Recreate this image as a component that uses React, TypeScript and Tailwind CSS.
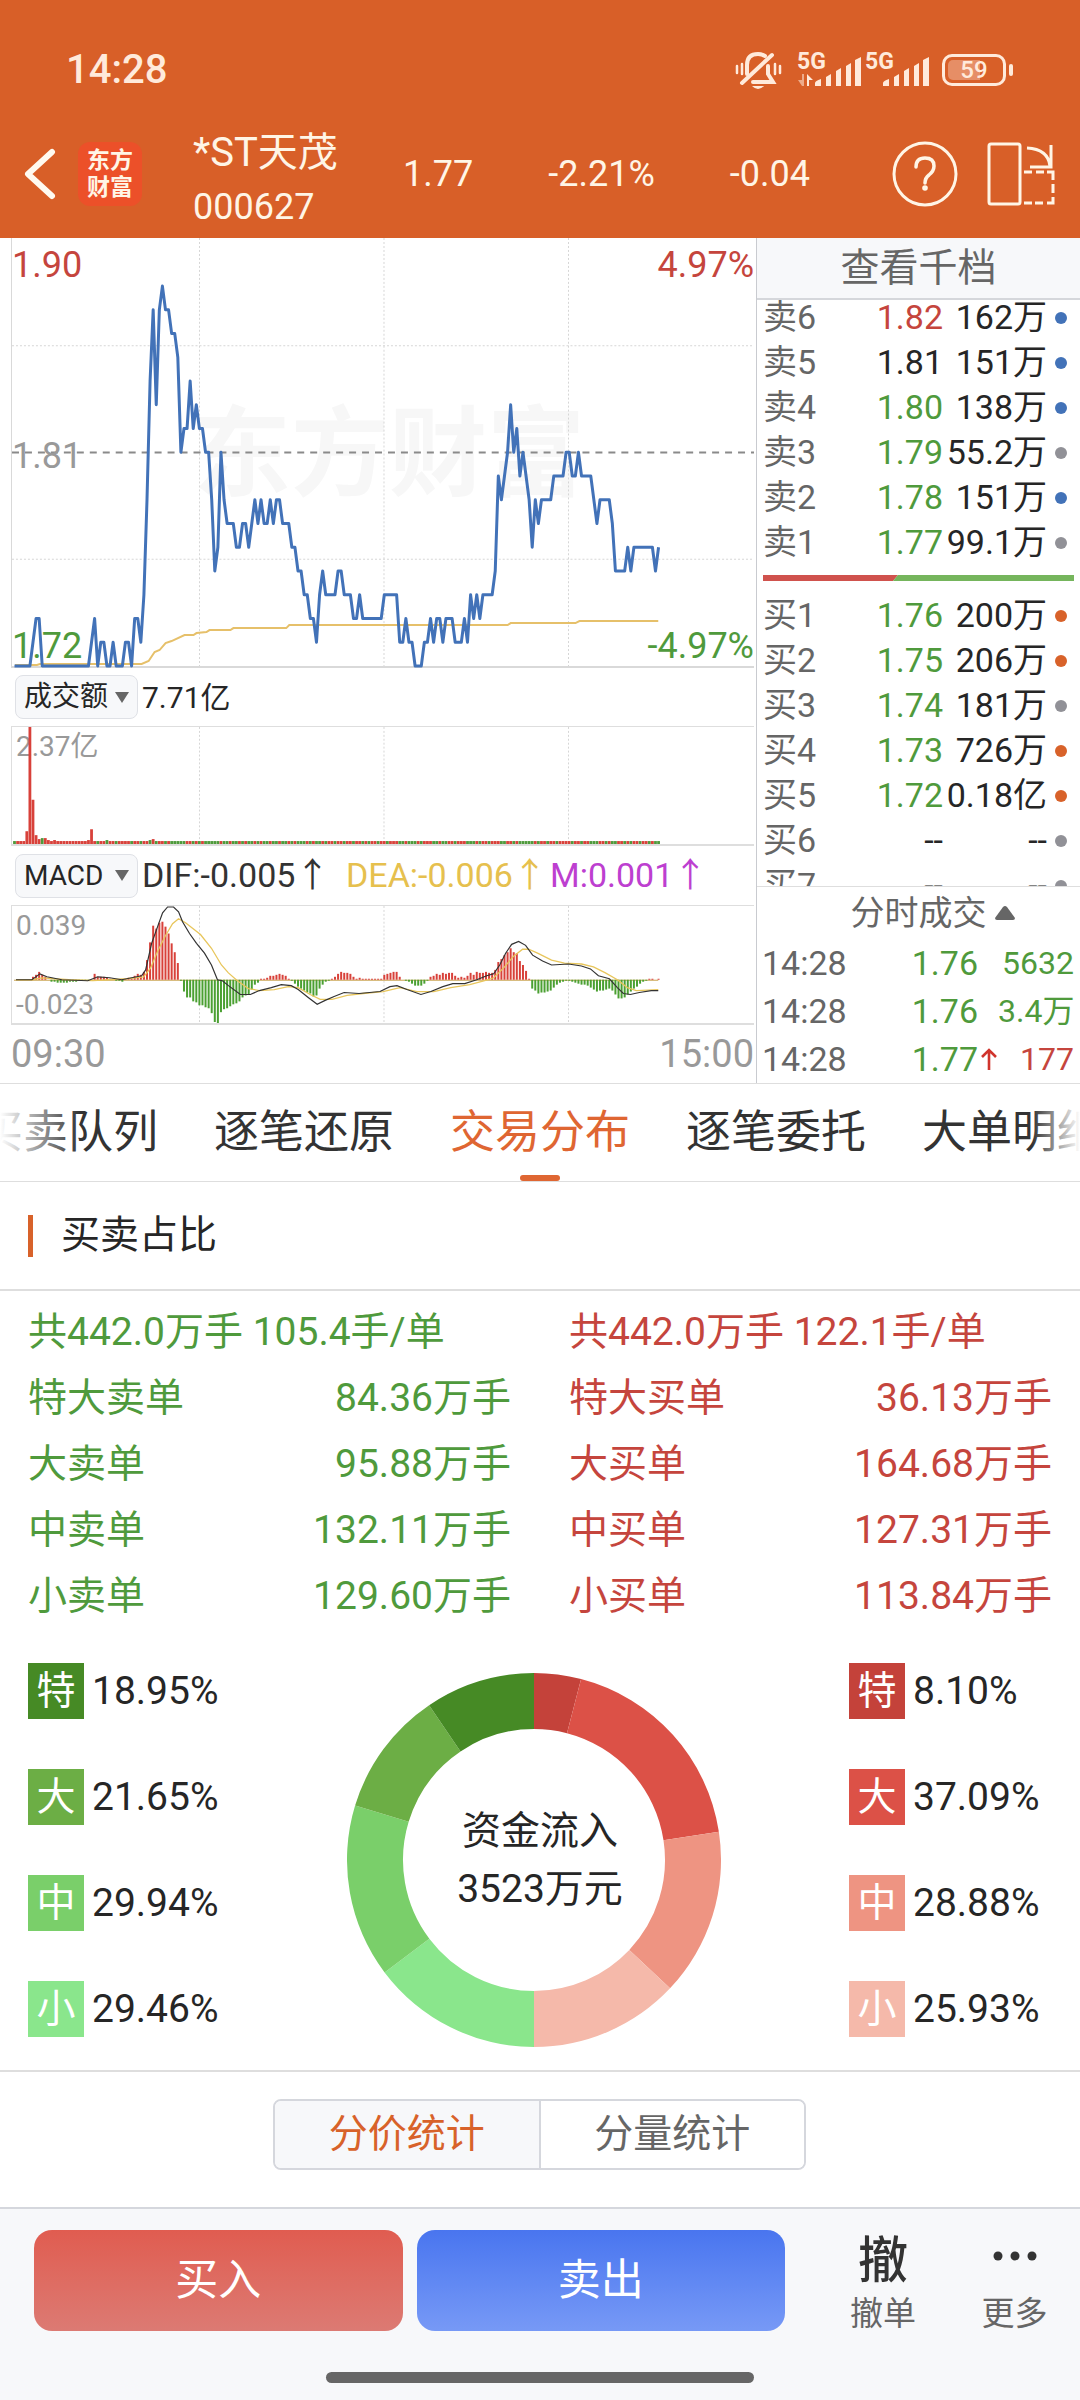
import { useState } from 'react';

// [price step above 1.72, minutes it holds]
const PRICE_RUNS: [number, number][] = [
  [0, 6], [1, 1], [2, 2], [0, 16], [1, 1], [2, 1], [0, 1], [1, 2], [0, 2], [1, 1],
  [0, 3], [1, 2], [0, 1], [2, 2], [1, 1], [3, 1], [7, 1], [12, 1], [15, 1], [11, 1],
  [15, 1], [16, 1], [15, 2], [14, 2], [13, 1], [9, 1], [10, 2], [12, 1], [10, 1], [11, 1],
  [10, 2], [9, 2], [7, 1], [4, 1], [5, 1], [9, 1], [7, 1], [6, 3], [5, 2], [6, 2],
  [5, 1], [6, 1], [7, 1], [6, 1], [7, 1], [6, 2], [7, 1], [6, 1], [7, 2], [6, 3],
  [5, 2], [4, 2], [3, 2], [2, 2], [1, 1], [3, 1], [4, 1], [3, 4], [4, 2], [3, 3],
  [2, 2], [3, 1], [2, 7], [3, 5], [1, 2], [2, 1], [1, 2], [0, 3], [1, 2], [2, 1],
  [1, 1], [2, 2], [1, 1], [2, 3], [1, 3], [2, 1], [1, 1], [3, 1], [2, 1], [3, 1],
  [2, 1], [3, 4], [4, 1], [8, 1], [7, 1], [8, 1], [9, 1], [11, 1], [9, 1], [10, 1],
  [8, 1], [9, 1], [8, 1], [7, 1], [5, 1], [7, 1], [6, 1], [7, 4], [8, 4], [9, 2],
  [8, 2], [9, 1], [8, 4], [7, 1], [6, 1], [7, 4], [6, 1], [4, 4], [5, 1], [4, 1],
  [5, 7], [4, 1], [5, 1],
];

const prices = PRICE_RUNS.flatMap(([value, count]) => Array<number>(count).fill(value));

const minuteX = (i: number) => 2.5 + i * 3.09;

const pricePoints = prices.map((p, i) => `${minuteX(i)},${429 - p * 23.8}`).join(' ');

const AVERAGE_POINTS =
  '3,428 25,428 28,427 130,427 137,424 143,415 148,413 154,406 160,404 173,398 182,398 185,396 195,395 198,393 219,393 222,391 275,391 278,388 497,388 500,386 565,386 569,384 648,384';

const VOLUME_SPIKES: Record<number, number> = {
  4: 13, 5: 119, 6: 45, 7: 9, 8: 5, 9: 6, 10: 6, 11: 4, 13: 4, 24: 4, 25: 15, 30: 4, 44: 4, 45: 5,
};

const MACD_BARS = [
  0, 0, 0, 0, 0, 0, 3, 5, 8, 5, 3, 0, -2, -2, -3, -3, -3, -3, -2, -2,
  -2, -1, -1, -1, -1, 0, 6, 3, 3, 3, 2, 1, 1, -1, -1, -2, 1, 2, 1, 4,
  6, 5, 8, 20, 38, 55, 52, 58, 59, 54, 47, 37, 28, 17, -1, -12, -18, -18, -22, -23,
  -26, -26, -28, -29, -34, -43, -44, -33, -30, -29, -27, -25, -24, -22, -18, -16, -15, -10, -5, -3,
  1, 1, 2, 4, 4, 5, 6, 5, 4, 1, -1, -4, -7, -9, -11, -13, -14, -17, -16, -9,
  -5, -2, -1, 1, 3, 6, 8, 7, 7, 6, 3, 1, 2, 1, 1, 1, 1, 1, 1, 1,
  5, 6, 7, 8, 8, 3, 0, -1, -2, -4, -6, -6, -6, -4, -1, 3, 4, 6, 5, 7,
  6, 7, 7, 4, 2, 3, 2, 4, 7, 5, 8, 7, 7, 8, 7, 7, 10, 18, 21, 25,
  28, 32, 28, 27, 19, 15, 9, 1, -9, -11, -14, -13, -13, -12, -11, -8, -5, -3, -2, -1,
  -1, -2, -3, -4, -5, -5, -6, -8, -10, -12, -11, -11, -10, -9, -11, -15, -19, -19, -18, -15,
  -12, -9, -7, -4, -2, -1, 1, 1, 0, 1,
];

const DIF_POINTS =
  '4,75 20,75 28,69 35,72 50,75 76,76 86,72 98,73 110,75 120,73 130,71 134,65 140,38 146,21 151,7 156,1 162,1 167,6 171,16 178,28 185,38 193,48 200,60 206,75 211,76 217,81 229,90 239,90 248,86 260,83 270,80 280,81 287,85 297,93 306,100 314,96 323,92 333,88 348,89 369,87 379,82 386,81 396,85 410,90 420,87 432,82 442,79 454,79 466,75 476,71 483,69 489,60 495,48 501,39 508,36 515,40 522,50 532,56 541,60 558,59 571,61 580,64 588,71 599,74 607,83 613,89 620,90 629,88 641,86 648,86';

const DEA_POINTS =
  '4,75 20,75 30,73 57,75 81,76 115,74 132,72 139,63 146,46 154,30 161,18 167,13 174,17 189,29 200,43 210,60 217,68 226,76 237,84 248,86 263,85 277,82 287,83 299,90 309,95 321,95 336,91 352,89 372,87 389,83 406,87 423,87 440,83 459,80 474,76 483,73 493,63 503,51 512,44 518,44 527,48 541,55 554,58 571,59 583,62 595,68 607,75 617,83 626,86 648,85';

const BLUE = 'bg-[#4272b8]';
const GRAY = 'bg-[#919197]';
const ORANGE = 'bg-[#d8622a]';
const RED_TEXT = 'text-[#c5453d]';
const GREEN_TEXT = 'text-[#4f9a3c]';
const DARK_TEXT = 'text-[#262626]';

const asks = [
  { label: '卖6', price: '1.82', volume: '162万', tone: RED_TEXT, dot: BLUE },
  { label: '卖5', price: '1.81', volume: '151万', tone: DARK_TEXT, dot: BLUE },
  { label: '卖4', price: '1.80', volume: '138万', tone: GREEN_TEXT, dot: BLUE },
  { label: '卖3', price: '1.79', volume: '55.2万', tone: GREEN_TEXT, dot: GRAY },
  { label: '卖2', price: '1.78', volume: '151万', tone: GREEN_TEXT, dot: BLUE },
  { label: '卖1', price: '1.77', volume: '99.1万', tone: GREEN_TEXT, dot: GRAY },
];

const bids = [
  { label: '买1', price: '1.76', volume: '200万', tone: GREEN_TEXT, dot: ORANGE },
  { label: '买2', price: '1.75', volume: '206万', tone: GREEN_TEXT, dot: ORANGE },
  { label: '买3', price: '1.74', volume: '181万', tone: GREEN_TEXT, dot: GRAY },
  { label: '买4', price: '1.73', volume: '726万', tone: GREEN_TEXT, dot: ORANGE },
  { label: '买5', price: '1.72', volume: '0.18亿', tone: GREEN_TEXT, dot: ORANGE },
  { label: '买6', price: '--', volume: '--', tone: DARK_TEXT, dot: GRAY },
  { label: '买7', price: '--', volume: '--', tone: DARK_TEXT, dot: GRAY },
];

const trades = [
  { time: '14:28', price: '1.76', arrow: '', volume: '5632', tone: GREEN_TEXT },
  { time: '14:28', price: '1.76', arrow: '', volume: '3.4万', tone: GREEN_TEXT },
  { time: '14:28', price: '1.77', arrow: 'up', volume: '177', tone: RED_TEXT },
];

const tabs = ['买卖队列', '逐笔还原', '交易分布', '逐笔委托', '大单明细'];

const sellOrders = [
  ['特大卖单', '84.36万手'],
  ['大卖单', '95.88万手'],
  ['中卖单', '132.11万手'],
  ['小卖单', '129.60万手'],
];

const buyOrders = [
  ['特大买单', '36.13万手'],
  ['大买单', '164.68万手'],
  ['中买单', '127.31万手'],
  ['小买单', '113.84万手'],
];

const sellShares = [
  { name: '特', value: 18.95, bg: 'bg-[#468a25]', fill: '#468a25' },
  { name: '大', value: 21.65, bg: 'bg-[#6cae45]', fill: '#6cae45' },
  { name: '中', value: 29.94, bg: 'bg-[#7acf6a]', fill: '#7acf6a' },
  { name: '小', value: 29.46, bg: 'bg-[#8ae68c]', fill: '#8ae68c' },
];

const buyShares = [
  { name: '特', value: 8.1, bg: 'bg-[#c4423a]', fill: '#c4423a' },
  { name: '大', value: 37.09, bg: 'bg-[#dc5147]', fill: '#dc5147' },
  { name: '中', value: 28.88, bg: 'bg-[#ee9482]', fill: '#ee9482' },
  { name: '小', value: 25.93, bg: 'bg-[#f5b9aa]', fill: '#f5b9aa' },
];

type Share = (typeof sellShares)[number];

function Signal({ data }: { data?: boolean }) {
  return (
    <svg className="h-9 w-16 overflow-visible" viewBox="0 0 64 36" fill="#ffeadb">
      <text x="-1" y="17" fontSize="23" fontWeight="700" fontFamily="Roboto, sans-serif">5G</text>
      {data && (
        <>
          <path d="M0 28h4v-6h2v12h-2z" opacity="0.55" />
          <path d="M9 22l6 6h-4v6h-2z" />
        </>
      )}
      <path d="M17 34v-3q0-2 6-4v7z" />
      <path d="M28 34V25l5-3v12z" />
      <path d="M38 34V19l5-3v18z" />
      <path d="M48 34V14l5-3v23z" />
      <path d="M57 34V8l6-3v29z" />
    </svg>
  );
}

function StatusBar() {
  return (
    <div className="flex h-[140px] items-center justify-between pr-[67px] pl-[66px] text-[#ffeadb]">
      <span className="text-[40px] font-medium">14:28</span>
      <div className="flex items-center">
        <svg className="mr-4 h-10 w-12" viewBox="0 0 48 40" fill="none" stroke="#ffeadb" strokeWidth="4" strokeLinecap="round">
          <path d="M13 24V15Q13 4 24 4q4 0 7 2" />
          <path d="M38 5 8 33" />
          <path d="M34 16v8l5 8H19" />
          <path d="M3 16v7M8 14v10M41 14v10M46 16v7" strokeWidth="2.5" />
          <path d="M18 36h12q-6 6-12 0z" fill="#ffeadb" stroke="none" />
        </svg>
        <Signal data />
        <span className="w-1" />
        <Signal />
        <div className="ml-3 flex items-center">
          <div className="relative flex h-8 w-16 items-center justify-center rounded-[10px] border-3 border-[#ffeadb]">
            <span className="absolute inset-y-[3px] left-[3px] w-8 rounded-l-[5px] bg-[#e68e66]" />
            <span className="relative text-2xl leading-none font-medium">59</span>
          </div>
          <span className="ml-[3px] h-3 w-1 rounded-sm bg-[#ffeadb]" />
        </div>
      </div>
    </div>
  );
}

function Header() {
  return (
    <header className="bg-[#d85f28] text-[#fff5e6]">
      <StatusBar />
      <div className="flex h-[98px] items-start pr-[22px] pl-6">
        <button aria-label="返回" className="mt-2 h-[52px] w-8">
          <svg className="h-full w-full" viewBox="0 0 32 52" fill="none" stroke="#fffaf0" strokeWidth="6" strokeLinecap="round" strokeLinejoin="round">
            <path d="M28 4 4 26l24 22" />
          </svg>
        </button>
        <div className="mt-[2px] ml-[22px] flex size-16 flex-col items-center justify-center rounded-xl bg-[#ec5029] text-[23px] leading-[27px] font-bold">
          <span>东方</span>
          <span>财富</span>
        </div>
        <div className="-mt-[14px] ml-[51px] w-[160px] whitespace-nowrap">
          <div className="text-[40px] leading-[54px]">*ST天茂</div>
          <div className="text-[36px] leading-[54px]">000627</div>
        </div>
        <div className="mt-2 flex flex-1 items-center justify-between pr-[82px] pl-[50px] text-[36px] leading-[52px]">
          <span>1.77</span>
          <span>-2.21%</span>
          <span>-0.04</span>
        </div>
        <button aria-label="帮助" className="mt-px size-[66px]">
          <svg className="h-full w-full" viewBox="0 0 66 66" fill="none" stroke="#fff5e6" strokeWidth="3" strokeLinecap="round">
            <circle cx="33" cy="33" r="31" />
            <path d="M24 26q0-9 9-9t9 8q0 5-5 9-4 3-4 8" strokeWidth="3.5" />
            <circle cx="33" cy="47" r="2.8" fill="#fff5e6" stroke="none" />
          </svg>
        </button>
        <button aria-label="横屏" className="mt-px ml-7 h-[66px] w-[72px]">
          <svg className="h-full w-full" viewBox="0 0 72 66" fill="none" stroke="#fff5e6" strokeWidth="3">
            <rect x="3" y="3" width="31" height="60" rx="2" />
            <path d="M41 7q21 1 23 18M65 4v22H44" />
            <path d="M38 31h8M50 31h8M61 31h6v8M67 43v9M67 56v6h-6M57 62h-8M46 62h-8" />
          </svg>
        </button>
      </div>
    </header>
  );
}

function GridLines({ height }: { height: number }) {
  return (
    <g stroke="#d6d6d6" strokeWidth="1" strokeDasharray="2 2">
      {[188, 373, 558].map((x) => (
        <line key={x} x1={x} x2={x} y1="0" y2={height} />
      ))}
    </g>
  );
}

function IndicatorButton({ label }: { label: string }) {
  return (
    <button className="ml-1 flex h-[44px] w-[123px] items-center justify-between rounded-lg border border-[#dfe1e6] bg-[#f7f8fa] pr-2 pl-2 text-[28px] leading-none text-[#262626]">
      {label}
      <svg className="h-[11px] w-[14px]" viewBox="0 0 14 11" fill="#666">
        <path d="M0 0h14L7 11z" />
      </svg>
    </button>
  );
}

function Charts() {
  return (
    <div className="flex min-w-0 flex-1 flex-col pr-0.5 pl-[11px]">
      <div className="relative h-[430px] border-b-2 border-l border-[#d9d9d9]">
        <div className="absolute inset-0 flex items-center justify-center pt-1 pl-3 text-[98px] font-bold text-[#f7f7f7]">东方财富</div>
        <svg className="absolute inset-0 h-full w-full overflow-visible" viewBox="0 0 744 429" preserveAspectRatio="none" fill="none">
          <GridLines height={429} />
          <path d="M0 108h744M0 322h744" stroke="#d6d6d6" strokeDasharray="2 2" />
          <path d="M0 215h744" stroke="#8a8a8a" strokeWidth="2" strokeDasharray="7 6" />
          <polyline points={AVERAGE_POINTS} stroke="#e6c06a" strokeWidth="2" />
          <polyline points={pricePoints} stroke="#4272b8" strokeWidth="3" strokeLinejoin="round" />
        </svg>
        <div className="absolute inset-x-0 top-[3px] -bottom-1 flex flex-col justify-between text-[36px] leading-[48px]">
          <div className="flex justify-between text-[#c5453d]">
            <span>1.90</span>
            <span>4.97%</span>
          </div>
          <div className="text-[#999]">1.81</div>
          <div className="flex justify-between text-[#4f9a3c]">
            <span>1.72</span>
            <span>-4.97%</span>
          </div>
        </div>
      </div>

      <div className="flex h-[58px] items-center gap-1 text-[30px] text-[#262626]">
        <IndicatorButton label="成交额" />
        <span>7.71亿</span>
      </div>
      <div className="relative h-[120px] border border-r-0 border-b-2 border-[#dedede]">
        <span className="absolute top-0 left-1 text-[28px] leading-10 text-[#999]">2.37亿</span>
        <svg className="absolute inset-0 h-full w-full" viewBox="0 0 744 119" preserveAspectRatio="none">
          <GridLines height={119} />
          {prices.map((p, i) => {
            const down = i === 0 || i === 9 || i === 30 || (i > 26 && (p < prices[i - 1] || (i * 7) % 11 < 3));
            const h = VOLUME_SPIKES[i] ?? 3;
            return <rect key={i} x={minuteX(i) - 1.4} y={119 - h} width="2.8" height={h} fill={down ? '#4f9a3c' : '#d8413a'} />;
          })}
        </svg>
      </div>

      <div className="flex h-[59px] items-center gap-1 text-[34px] whitespace-nowrap text-[#333]">
        <IndicatorButton label="MACD" />
        <span className="w-[200px]">DIF:-0.005↑</span>
        <span className="w-[200px] text-[#e6c04e]">DEA:-0.006↑</span>
        <span className="text-[#bd3fd0]">M:0.001↑</span>
      </div>
      <div className="relative h-[120px] border border-r-0 border-b-2 border-[#dedede]">
        <svg className="absolute inset-0 h-full w-full" viewBox="0 0 744 119" preserveAspectRatio="none" fill="none">
          <GridLines height={119} />
          <path d="M2 75.5H648" stroke="#c9a24c" strokeWidth="1" />
          {MACD_BARS.map((v, i) => (
            <rect key={i} x={minuteX(i) - 1} y={v > 0 ? 75 - v : 75} width="2" height={Math.abs(v)} fill={v > 0 ? '#d8413a' : '#4ba032'} />
          ))}
          <polyline points={DEA_POINTS} stroke="#e8c65c" strokeWidth="1.3" />
          <polyline points={DIF_POINTS} stroke="#333" strokeWidth="1.2" />
        </svg>
        <div className="absolute inset-0 flex flex-col justify-between pt-0.5 pl-1 text-[28px] leading-9 text-[#999]">
          <span>0.039</span>
          <span>-0.023</span>
        </div>
      </div>
      <div className="flex h-[58px] items-center justify-between text-[38px] text-[#999]">
        <span>09:30</span>
        <span>15:00</span>
      </div>
    </div>
  );
}

function DepthTable({ rows }: { rows: typeof asks }) {
  return (
    <table className="w-full table-fixed text-[34px] leading-[45px] whitespace-nowrap">
      <tbody>
        {rows.map((row) => (
          <tr key={row.label} className="h-[45px]">
            <td className="w-[66px] p-0 pl-[6px] text-[#666]">{row.label}</td>
            <td className={`p-0 text-right ${row.tone}`}>{row.price}</td>
            <td className="w-[104px] p-0 text-right text-[#262626]">{row.volume}</td>
            <td className="w-[33px] p-0">
              <span className={`ml-2 block size-3 rounded-full ${row.dot}`} />
            </td>
          </tr>
        ))}
      </tbody>
    </table>
  );
}

function OrderBook() {
  return (
    <div className="flex w-[324px] shrink-0 flex-col border-l border-[#c9cbd0]">
      <button className="h-[62px] border-b-2 border-[#d5d7db] bg-[#f7f8fa] text-[39px] leading-none text-[#666]">查看千档</button>
      <div className="h-[586px] overflow-hidden">
        <div className="-mt-[5px]">
          <DepthTable rows={asks} />
          <div className="mx-[6px] mt-[10px] mb-3 h-[6px]">
            <svg className="h-full w-full" viewBox="0 0 311 6" preserveAspectRatio="none">
              <path d="M0 0h135l-5 6H0z" fill="#d0524d" />
              <path d="M135 0h176v6H130z" fill="#75b55c" />
            </svg>
          </div>
          <DepthTable rows={bids} />
        </div>
      </div>
      <button className="flex h-[53px] items-center justify-center gap-2 border-t border-[#dedede] pl-7 text-[34px] leading-none text-[#666]">
        分时成交
        <svg className="h-[14px] w-5" viewBox="0 0 20 14" fill="#666">
          <path d="M10 0q1 0 2 1l8 11q0 2-2 2H2q-2 0-2-2L8 1q1-1 2-1z" />
        </svg>
      </button>
      <table className="w-full table-fixed text-[34px] leading-[48px] whitespace-nowrap">
        <tbody>
          {trades.map((trade, i) => (
            <tr key={i} className="h-12">
              <td className="w-[98px] p-0 pl-[5px] text-[#666]">{trade.time}</td>
              <td className="p-0 text-right text-[#4f9a3c]">{trade.price}</td>
              <td className="w-5 p-0">
                {trade.arrow && (
                  <svg className="ml-[3px] h-[22px] w-4" viewBox="0 0 16 22" fill="none" stroke="#d0342c" strokeWidth="2.6">
                    <path d="M8 22V2M1 9l7-7 7 7" />
                  </svg>
                )}
              </td>
              <td className={`w-[82px] p-0 pr-[6px] text-right text-[32px] ${trade.tone}`}>{trade.volume}</td>
            </tr>
          ))}
        </tbody>
      </table>
    </div>
  );
}

function Tabs() {
  const [active, setActive] = useState('交易分布');
  return (
    <nav className="relative flex h-[99px] justify-center gap-14 overflow-hidden border-y border-[#dedede]">
      {tabs.map((tab) => (
        <button
          key={tab}
          onClick={() => setActive(tab)}
          className={`relative shrink-0 text-[45px] leading-none whitespace-nowrap ${tab === active ? 'text-[#df6632]' : 'text-[#333]'}`}
        >
          {tab}
          {tab === active && <span className="absolute bottom-0 left-1/2 h-[6px] w-10 -translate-x-1/2 rounded-full bg-[#df6632]" />}
        </button>
      ))}
      <span className="pointer-events-none absolute inset-y-0 left-0 w-20 bg-linear-to-r from-white to-transparent" />
      <span className="pointer-events-none absolute inset-y-0 right-0 w-12 bg-linear-to-l from-white to-transparent" />
    </nav>
  );
}

function OrderSummary({ total, rows, tone }: { total: string; rows: string[][]; tone: string }) {
  return (
    <div className={`text-[39px] leading-[66px] whitespace-nowrap ${tone}`}>
      <div>{total}</div>
      {rows.map(([label, value]) => (
        <div key={label} className="flex justify-between">
          <span>{label}</span>
          <span>{value}</span>
        </div>
      ))}
    </div>
  );
}

function ShareLegend({ shares }: { shares: Share[] }) {
  return (
    <>
      {shares.map((share) => (
        <div key={share.name} className="flex items-center gap-2 text-[39px] leading-none text-[#262626]">
          <span className={`flex size-14 items-center justify-center text-white ${share.bg}`}>{share.name}</span>
          {share.value.toFixed(2)}%
        </div>
      ))}
    </>
  );
}

function ringPoint(percent: number, radius: number) {
  const angle = (percent / 100) * Math.PI;
  return `${187 + radius * Math.sin(angle)} ${187 - radius * Math.cos(angle)}`;
}

function ringSlice(from: number, to: number) {
  return `M${ringPoint(from, 187)}A187 187 0 0 1 ${ringPoint(to, 187)}L${ringPoint(to, 131)}A131 131 0 0 0 ${ringPoint(from, 131)}z`;
}

function Donut() {
  // buy shares run clockwise from the top, sell shares close the ring from the bottom
  const ring = [...buyShares, ...[...sellShares].reverse()];
  let end = 0;
  return (
    <div className="relative mt-[10px] size-[374px]">
      <svg className="h-full w-full" viewBox="0 0 374 374">
        {ring.map((share) => {
          const start = end;
          end += share.value;
          return <path key={share.fill} d={ringSlice(start, end)} fill={share.fill} />;
        })}
      </svg>
      <div className="absolute inset-0 flex flex-col items-center justify-center pl-3 text-[39px] leading-[58px] text-[#262626]">
        <span>资金流入</span>
        <span>3523万元</span>
      </div>
    </div>
  );
}

function BottomBar() {
  return (
    <footer className="border-t-2 border-[#d5d7dd] bg-[#f7f8fa] pt-[21px] pb-[17px]">
      <div className="flex items-start pl-[34px]">
        <button className="h-[101px] flex-1 rounded-[18px] bg-linear-to-b from-[#e05c50] to-[#dc7a73] text-[43px] leading-none text-white">买入</button>
        <button className="ml-[14px] h-[101px] flex-1 rounded-[18px] bg-linear-to-b from-[#4975ef] to-[#7799f6] text-[43px] leading-none text-white">卖出</button>
        <button className="ml-8 flex w-[132px] flex-col items-center text-[33px] leading-[44px] text-[#666]">
          <span className="text-[50px] leading-[62px] font-medium text-[#333]">撤</span>
          撤单
        </button>
        <button className="flex w-[131px] flex-col items-center text-[33px] leading-[44px] text-[#666]">
          <svg className="h-[62px] w-12" viewBox="0 0 48 62" fill="#333">
            <circle cx="7" cy="26" r="4.5" />
            <circle cx="24" cy="26" r="4.5" />
            <circle cx="41" cy="26" r="4.5" />
          </svg>
          更多
        </button>
      </div>
      <div className="mx-auto mt-9 h-[11px] w-[428px] rounded-full bg-[#666]" />
    </footer>
  );
}

export default function App() {
  const [stat, setStat] = useState('分价统计');
  return (
    <div className="bg-white font-[Roboto,'Noto_Sans_CJK_SC',sans-serif]">
      <Header />
      <section className="flex">
        <Charts />
        <OrderBook />
      </section>
      <Tabs />

      <div className="flex h-[109px] items-center gap-[28px] border-b-2 border-[#dedede] pl-7">
        <span className="h-[42px] w-[5px] bg-[#d8622a]" />
        <h2 className="text-[39px] text-[#262626]">买卖占比</h2>
      </div>

      <div className="grid grid-cols-2 gap-[58px] px-7 pt-2">
        <OrderSummary total="共442.0万手 105.4手/单" rows={sellOrders} tone="text-[#4f9a3c]" />
        <OrderSummary total="共442.0万手 122.1手/单" rows={buyOrders} tone="text-[#c5453d]" />
      </div>

      <div className="flex items-start justify-between px-7 pt-[34px] pb-[23px]">
        <div className="flex w-[191px] flex-col gap-[50px]">
          <ShareLegend shares={sellShares} />
        </div>
        <Donut />
        <div className="flex w-[203px] flex-col gap-[50px]">
          <ShareLegend shares={buyShares} />
        </div>
      </div>

      <div className="flex justify-center border-t-2 border-[#dedede] pt-[27px] pr-px pb-[37px]">
        <div className="flex h-[71px] w-[533px] overflow-hidden rounded-lg border-2 border-[#d5d7dd]">
          {['分价统计', '分量统计'].map((name) => (
            <button
              key={name}
              onClick={() => setStat(name)}
              className={`flex-1 border-[#d5d7dd] text-[39px] leading-none first:border-r-2 ${
                name === stat ? 'bg-[#f7f8fa] text-[#d8622a]' : 'bg-white text-[#666]'
              }`}
            >
              {name}
            </button>
          ))}
        </div>
      </div>

      <BottomBar />
    </div>
  );
}
